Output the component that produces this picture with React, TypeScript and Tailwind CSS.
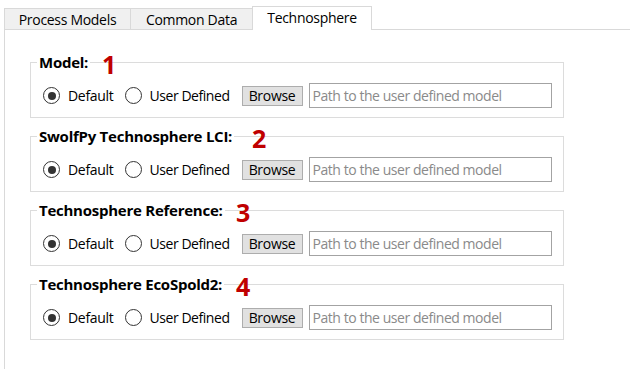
import React from "react";

const groups = [
  { title: "Model:", num: "1", numX: 72 },
  { title: "SwolfPy Technosphere LCI:", num: "2", numX: 222 },
  { title: "Technosphere Reference:", num: "3", numX: 206 },
  { title: "Technosphere EcoSpold2:", num: "4", numX: 206 },
];

function Radio({ checked }: { checked?: boolean }) {
  return (
    <span className="w-[17px] h-[17px] rounded-full border border-[#333333] bg-white flex items-center justify-center shrink-0">
      {checked && <span className="w-[8px] h-[8px] rounded-full bg-[#333333]" />}
    </span>
  );
}

export default function App() {
  return (
    <div className="w-[630px] h-[369px] bg-white overflow-hidden font-['Open_Sans',sans-serif] text-black">
      <div className="flex items-end h-[29px] pl-[4px]">
        <div className="h-[21px] w-[126px] bg-[#f0f0f0] border-l border-t border-[#d9d9d9] flex items-center justify-center text-[14px] tracking-[-0.3px] leading-none pt-[1px]">
          Process Models
        </div>
        <div className="h-[21px] w-[122px] bg-[#f0f0f0] border-l border-t border-[#d9d9d9] flex items-center justify-center text-[14px] tracking-[-0.3px] leading-none pt-[1px]">
          Common Data
        </div>
        <div className="relative z-10 h-[24px] w-[120px] mb-[-1px] bg-white border-x border-t border-[#d9d9d9] flex items-center justify-center text-[14px] tracking-[-0.3px] leading-none pb-[2px]">
          Technosphere
        </div>
      </div>
      <div className="ml-[4px] h-[340px] border-l border-t border-[#d9d9d9] pl-[25px] pt-[22px]">
        {groups.map((g) => (
          <div key={g.num} className="relative w-[534px] mb-[8px]">
            <fieldset className="border border-[#dcdcdc] pb-[9px]">
              <legend className="ml-[6px] px-[2px] text-[15px] font-bold leading-[20px] tracking-[-0.25px]">
                {g.title}
              </legend>
              <div className="flex items-center h-[25px] mt-[11px] pl-[12px] text-[14px] tracking-[-0.3px]">
                <Radio checked />
                <span className="ml-[8px]">Default</span>
                <span className="ml-[11px]">
                  <Radio />
                </span>
                <span className="ml-[8px] tracking-[-0.45px]">User Defined</span>
                <button className="ml-[12px] w-[61px] h-[20px] bg-[#e1e1e1] border border-[#adadad] text-[14px] leading-none flex items-center justify-center">
                  Browse
                </button>
                <input
                  className="ml-[6px] w-[243px] h-[25px] border border-[#a3a3a3] px-[3px] text-[14px] tracking-[-0.45px] outline-none placeholder:text-[#8a8a8a]"
                  placeholder="Path to the user defined model"
                  readOnly
                />
              </div>
            </fieldset>
            <span
              className="absolute top-[0px] text-[25px] font-bold leading-none text-[#c00000]"
              style={{ left: g.numX }}
            >
              {g.num}
            </span>
          </div>
        ))}
      </div>
    </div>
  );
}
